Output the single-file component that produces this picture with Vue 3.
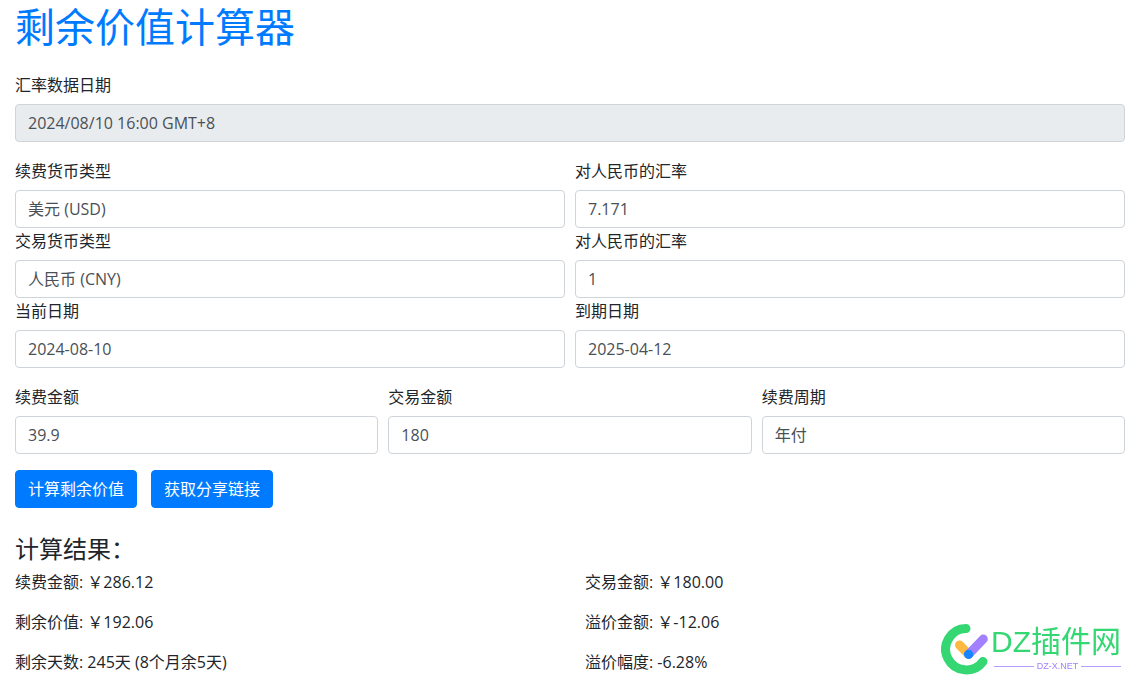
<script setup>
import { ref } from 'vue'

const rateDate = ref('2024/08/10 16:00 GMT+8')
const renewCurrency = ref('美元 (USD)')
const tradeCurrency = ref('人民币 (CNY)')
const cycle = ref('年付')

const f = ref({
  renewRate: '7.171',
  tradeRate: '1',
  today: '2024-08-10',
  expiry: '2025-04-12',
  renewAmount: '39.9',
  tradeAmount: '180',
})

const results = [
  '续费金额: ￥286.12',
  '交易金额: ￥180.00',
  '剩余价值: ￥192.06',
  '溢价金额: ￥-12.06',
  '剩余天数: 245天 (8个月余5天)',
  '溢价幅度: -6.28%',
]
</script>

<template>
  <main class="page">
    <h1>剩余价值计算器</h1>
    <form @submit.prevent>
      <div class="group">
        <label for="rate-date">汇率数据日期</label>
        <input id="rate-date" v-model="rateDate" class="control" type="text" readonly />
      </div>

      <div class="group cols two">
        <div>
          <label for="renew-currency">续费货币类型</label>
          <select id="renew-currency" v-model="renewCurrency" class="control">
            <option>美元 (USD)</option>
            <option>人民币 (CNY)</option>
          </select>
        </div>
        <div>
          <label for="renew-rate">对人民币的汇率</label>
          <input id="renew-rate" v-model="f.renewRate" class="control" type="text" />
        </div>
        <div>
          <label for="trade-currency">交易货币类型</label>
          <select id="trade-currency" v-model="tradeCurrency" class="control">
            <option>美元 (USD)</option>
            <option>人民币 (CNY)</option>
          </select>
        </div>
        <div>
          <label for="trade-rate">对人民币的汇率</label>
          <input id="trade-rate" v-model="f.tradeRate" class="control" type="text" />
        </div>
        <div>
          <label for="today">当前日期</label>
          <input id="today" v-model="f.today" class="control" type="text" />
        </div>
        <div>
          <label for="expiry">到期日期</label>
          <input id="expiry" v-model="f.expiry" class="control" type="text" />
        </div>
      </div>

      <div class="group cols three">
        <div>
          <label for="renew-amount">续费金额</label>
          <input id="renew-amount" v-model="f.renewAmount" class="control" type="text" />
        </div>
        <div>
          <label for="trade-amount">交易金额</label>
          <input id="trade-amount" v-model="f.tradeAmount" class="control" type="text" />
        </div>
        <div>
          <label for="cycle">续费周期</label>
          <select id="cycle" v-model="cycle" class="control">
            <option>年付</option>
            <option>月付</option>
          </select>
        </div>
      </div>

      <div class="actions">
        <button type="submit">计算剩余价值</button>
        <button type="button">获取分享链接</button>
      </div>
    </form>

    <section>
      <h2>计算结果：</h2>
      <div class="results">
        <p v-for="r in results" :key="r">{{ r }}</p>
      </div>
    </section>

    <div class="brand">
      <svg width="50" height="52" viewBox="0 0 50 52" fill="none" stroke-linecap="round" stroke-width="9" aria-hidden="true">
        <path d="M25 5.500A20.700 20.700 0 1 0 42 38.500" stroke="#35d773" />
        <path d="M18.500 22L27.600 31.300" stroke="#ffb940" />
        <path d="M42.300 16L27.600 31.300" stroke="#a280ff" />
        <circle cx="27.600" cy="31.300" r="4.600" fill="#1487ff" />
      </svg>
      <div class="brand-text">
        <span class="brand-name">DZ插件网</span>
        <span class="brand-site">DZ-X.NET</span>
      </div>
    </div>
  </main>
</template>

<style>
body {
  margin: 0;
  background: #fff;
}
</style>

<style scoped>
.page {
  padding: 3px 15px 0;
  color: #212529;
  font-family: "Open Sans", "Noto Sans CJK SC", sans-serif;
  font-size: 16px;
  line-height: 24px;
}
h1 {
  margin: 0 0 21px;
  color: #007bff;
  font-size: 40px;
  font-weight: 400;
  line-height: 48px;
}
.group {
  margin-bottom: 16px;
}
label {
  display: block;
  margin-bottom: 6px;
  line-height: 26px;
}
.control {
  display: block;
  box-sizing: border-box;
  width: 100%;
  height: 38px;
  margin: 0;
  padding: 6px 12px;
  border: 1px solid #ced4da;
  border-radius: 4px;
  background: #fff;
  color: #495057;
  font: inherit;
  appearance: none;
}
.control[readonly] {
  background: #e9ecef;
}
.cols {
  display: grid;
  column-gap: 10px;
}
.two {
  grid-template-columns: repeat(2, 1fr);
}
.three {
  grid-template-columns: repeat(3, 1fr);
}
.actions {
  display: flex;
  gap: 14px;
}
button {
  height: 38px;
  padding: 6px 12px;
  border: 1px solid #007bff;
  border-radius: 4px;
  background: #007bff;
  color: #fff;
  font: inherit;
}
h2 {
  margin: 26px 0 7px;
  font-size: 24px;
  font-weight: 400;
  line-height: 29px;
}
.results {
  display: grid;
  grid-template-columns: repeat(2, 1fr);
  gap: 16px 30px;
}
.results p {
  margin: 0;
}
.brand {
  position: fixed;
  right: 19px;
  bottom: 14px;
  display: flex;
}
.brand-text {
  display: flex;
  flex-direction: column;
  font-family: "Liberation Sans", "Noto Sans CJK SC", sans-serif;
}
.brand-name {
  color: #35d773;
  font-size: 30px;
  line-height: 38px;
}
.brand-site {
  display: flex;
  align-items: center;
  gap: 3px;
  margin-left: 3px;
  color: #a280ff;
  font-size: 9px;
  line-height: 10px;
}
.brand-site::before,
.brand-site::after {
  content: "";
  flex: 1;
  height: 1px;
  background: #b79dff;
}
</style>
